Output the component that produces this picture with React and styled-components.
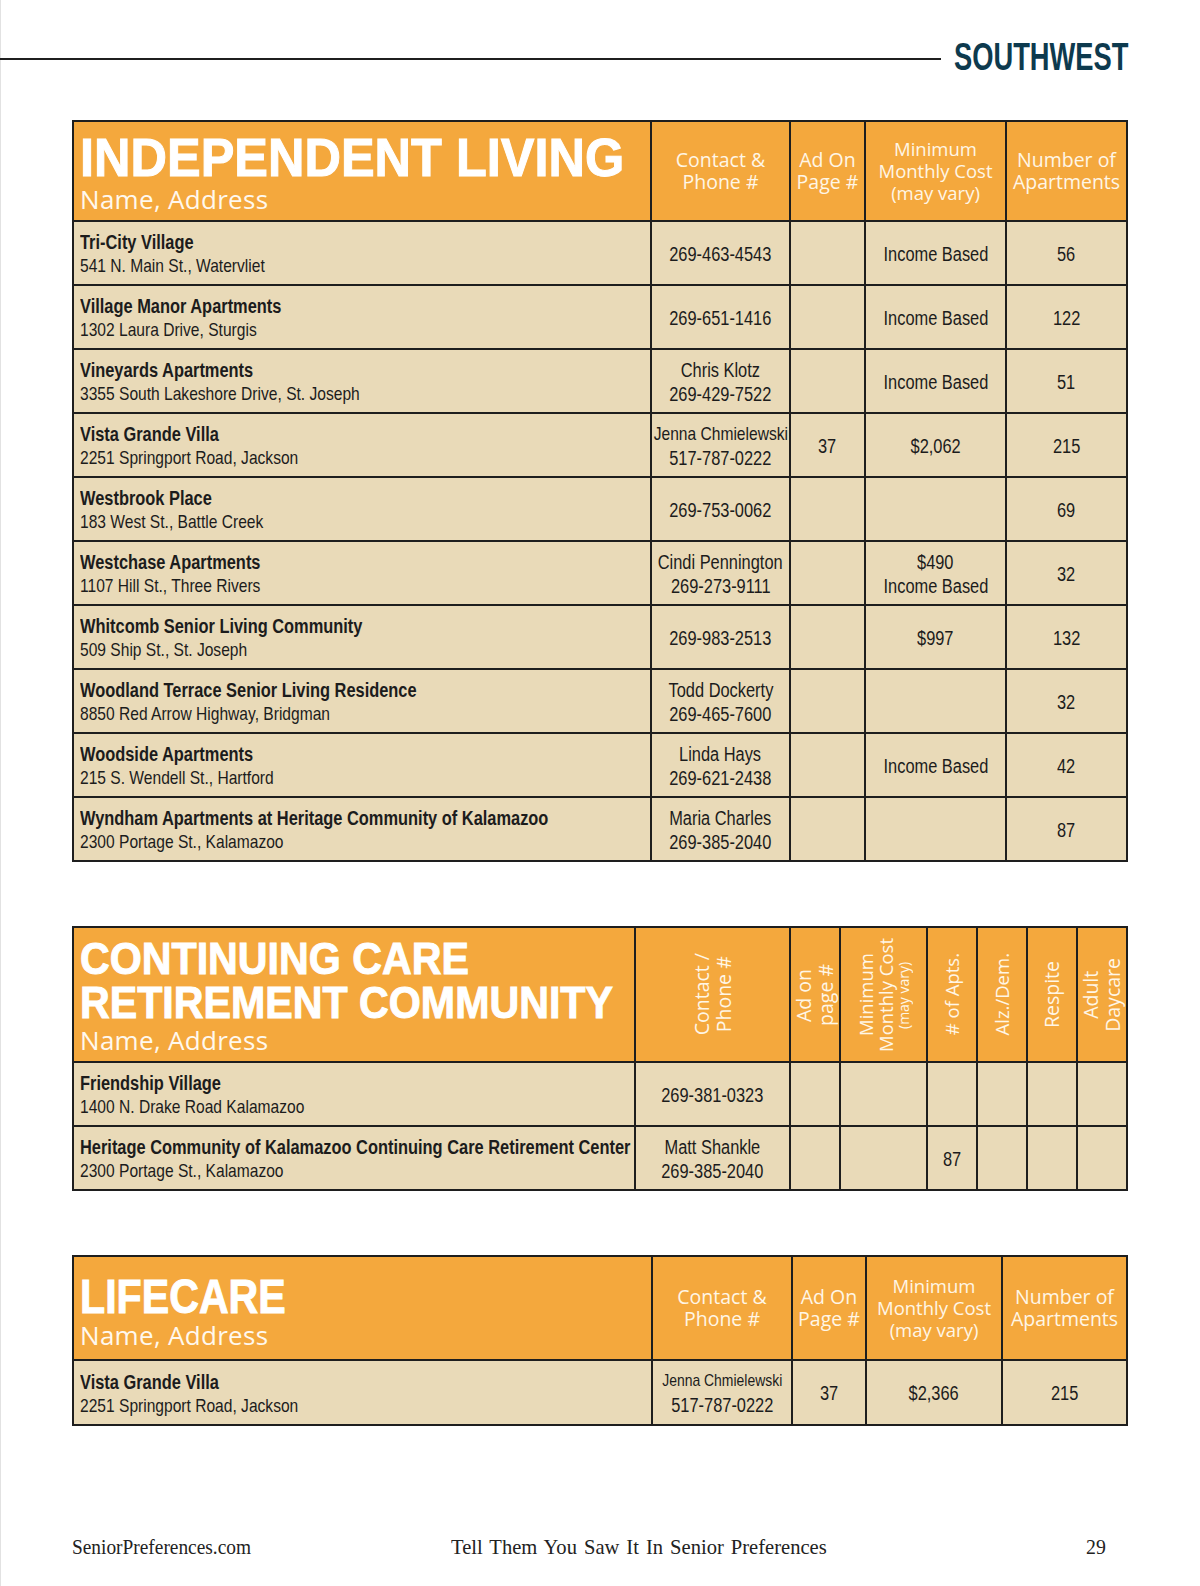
import styled, { createGlobalStyle } from "styled-components";

const GlobalStyle = createGlobalStyle`
  html, body {
    margin: 0;
    padding: 0;
    background: #ffffff;
  }
  body {
    font-family: "Liberation Sans", Arial, sans-serif;
    color: #1c1c1c;
  }
`;

const independent = [
    { name: "Tri-City Village", address: "541 N. Main St., Watervliet", contact: ["269-463-4543"], page: "", cost: ["Income Based"], units: "56" },
    { name: "Village Manor Apartments", address: "1302 Laura Drive, Sturgis", contact: ["269-651-1416"], page: "", cost: ["Income Based"], units: "122" },
    { name: "Vineyards Apartments", address: "3355 South Lakeshore Drive, St. Joseph", contact: ["Chris Klotz", "269-429-7522"], page: "", cost: ["Income Based"], units: "51" },
    { name: "Vista Grande Villa", address: "2251 Springport Road, Jackson", contact: ["Jenna Chmielewski", "517-787-0222"], fit: 19, page: "37", cost: ["$2,062"], units: "215" },
    { name: "Westbrook Place", address: "183 West St., Battle Creek", contact: ["269-753-0062"], page: "", cost: [], units: "69" },
    { name: "Westchase Apartments", address: "1107 Hill St., Three Rivers", contact: ["Cindi Pennington", "269-273-9111"], page: "", cost: ["$490", "Income Based"], units: "32" },
    { name: "Whitcomb Senior Living Community", address: "509 Ship St., St. Joseph", contact: ["269-983-2513"], page: "", cost: ["$997"], units: "132" },
    { name: "Woodland Terrace Senior Living Residence", address: "8850 Red Arrow Highway, Bridgman", contact: ["Todd Dockerty", "269-465-7600"], page: "", cost: [], units: "32" },
    { name: "Woodside Apartments", address: "215 S. Wendell St., Hartford", contact: ["Linda Hays", "269-621-2438"], page: "", cost: ["Income Based"], units: "42" },
    { name: "Wyndham Apartments at Heritage Community of Kalamazoo", address: "2300 Portage St., Kalamazoo", contact: ["Maria Charles", "269-385-2040"], page: "", cost: [], units: "87" },
];

const continuing = [
    { name: "Friendship Village", address: "1400 N. Drake Road Kalamazoo", contact: ["269-381-0323"], rest: ["", "", "", "", "", ""] },
    { name: "Heritage Community of Kalamazoo Continuing Care Retirement Center", address: "2300 Portage St., Kalamazoo", contact: ["Matt Shankle", "269-385-2040"], rest: ["", "", "87", "", "", ""] },
];

const lifecare = [
    { name: "Vista Grande Villa", address: "2251 Springport Road, Jackson", contact: ["Jenna Chmielewski", "517-787-0222"], fit: 17, page: "37", cost: ["$2,366"], units: "215" },
];

function Listing({ item }) {
    return (
        <NameCell>
            <Name>{item.name}</Name>
            <Address>{item.address}</Address>
        </NameCell>
    );
}

function Value({ lines, fit }) {
    return (
        <DataCell>
            {lines.filter(Boolean).map((line, i) => (
                <Line key={i} $size={fit && i === 0 ? fit : 20}>{line}</Line>
            ))}
        </DataCell>
    );
}

function Row({ item }) {
    return (
        <>
            <Listing item={item} />
            <Value lines={item.contact} fit={item.fit} />
            <Value lines={[item.page]} />
            <Value lines={item.cost} />
            <Value lines={[item.units]} />
        </>
    );
}

function CareRow({ item }) {
    return (
        <>
            <Listing item={item} />
            <Value lines={item.contact} />
            {item.rest.map((value, i) => <Value key={i} lines={[value]} />)}
        </>
    );
}

function StandardHead() {
    return (
        <>
            <HeadCell>Contact &amp;<br />Phone #</HeadCell>
            <HeadCell>Ad On<br />Page #</HeadCell>
            <HeadCell $size={18.5}>Minimum<br />Monthly Cost<br />(may vary)</HeadCell>
            <HeadCell>Number of<br />Apartments</HeadCell>
        </>
    );
}

export default function App() {
    return (
        <Page>
            <GlobalStyle />
            <TopBar>
                <Rule />
                <Region><span>SOUTHWEST</span></Region>
            </TopBar>

            <Content>
                <Sheet $cols="576px 137px 73px 139px 119px" $head={98} $row={62}>
                    <TitleCell $pad={8}>
                        <Title $size={54} $lh={54} $squeeze={0.935}>Independent Living</Title>
                        <Subtitle>Name, Address</Subtitle>
                    </TitleCell>
                    <StandardHead />
                    {independent.map((item) => <Row key={item.name} item={item} />)}
                </Sheet>

                <Sheet $cols="560px 153px 48px 85px 48px 48px 48px 48px" $head={133} $row={62}>
                    <TitleCell $pad={9}>
                        <Title $size={45} $lh={44} $squeeze={0.915}>Continuing Care<br />Retirement Community</Title>
                        <Subtitle>Name, Address</Subtitle>
                    </TitleCell>
                    <HeadCell><Vertical>Contact /<br />Phone #</Vertical></HeadCell>
                    <HeadCell><Vertical>Ad on<br />page #</Vertical></HeadCell>
                    <HeadCell $size={18.5}>
                        <Vertical $lh={20}>
                            <span>Minimum<br />Monthly Cost</span>
                            <Fine>(may vary)</Fine>
                        </Vertical>
                    </HeadCell>
                    <HeadCell $size={18.5}><Vertical># of Apts.</Vertical></HeadCell>
                    <HeadCell $size={18.5}><Vertical>Alz./Dem.</Vertical></HeadCell>
                    <HeadCell><Vertical>Respite</Vertical></HeadCell>
                    <HeadCell><Vertical>Adult<br />Daycare</Vertical></HeadCell>
                    {continuing.map((item) => <CareRow key={item.name} item={item} />)}
                </Sheet>

                <Sheet $cols="577px 138px 72px 134px 123px" $head={102} $row={63}>
                    <TitleCell $pad={15}>
                        <Title $size={49} $lh={48} $squeeze={0.84}>Lifecare</Title>
                        <Subtitle>Name, Address</Subtitle>
                    </TitleCell>
                    <StandardHead />
                    {lifecare.map((item) => <Row key={item.name} item={item} />)}
                </Sheet>
            </Content>

            <Footer>
                <FootText $squeeze={0.88}>SeniorPreferences.com</FootText>
                <FootText $squeeze={0.935} $words={2}>Tell Them You Saw It In Senior Preferences</FootText>
                <FootText $squeeze={0.9}>29</FootText>
            </Footer>
        </Page>
    );
}

const Page = styled.div`
    width: 1200px;
    min-height: 1586px;
    display: flex;
    flex-direction: column;
    box-shadow: inset 1px 0 0 #e2e2e2;
`;

const TopBar = styled.header`
    display: flex;
    align-items: center;
    gap: 13px;
    height: 40px;
    margin-top: 37px;
    padding-right: 72px;
`;

const Rule = styled.div`
    flex: 1;
    height: 2px;
    margin-top: 4px;
    background: #1f1f1f;
`;

const Region = styled.h2`
    width: 174px;
    margin: 0;
    font-weight: 700;
    font-size: 39px;
    line-height: 40px;
    color: #0d3a4e;
    white-space: nowrap;

    span {
        display: inline-block;
        transform: scaleX(0.7);
        transform-origin: left center;
    }
`;

const Content = styled.main`
    display: flex;
    flex-direction: column;
    gap: 64px;
    margin-top: 43px;
    padding: 0 72px;
`;

const Sheet = styled.section`
    display: grid;
    grid-template-columns: ${props => props.$cols};
    grid-template-rows: ${props => props.$head}px;
    grid-auto-rows: ${props => props.$row}px;
    gap: 2px;
    padding: 2px;
    background: #1e1e1e;
`;

const TitleCell = styled.div`
    padding: ${props => props.$pad}px 8px 0 6px;
    background: #f4a83d;
    color: #ffffff;
    overflow: hidden;
`;

const Title = styled.h1`
    margin: 0;
    font-weight: 700;
    font-size: ${props => props.$size}px;
    line-height: ${props => props.$lh}px;
    text-transform: uppercase;
    white-space: nowrap;
    -webkit-text-stroke: 1px #ffffff;
    transform: scaleX(${props => props.$squeeze});
    transform-origin: left top;
`;

const Subtitle = styled.div`
    font-family: "Open Sans", sans-serif;
    font-size: 26px;
    line-height: 30px;
    letter-spacing: 0.3px;
    color: #fff8ee;
`;

const HeadCell = styled.div`
    display: flex;
    align-items: center;
    justify-content: center;
    background: #f4a83d;
    text-align: center;
    font-family: "Open Sans", sans-serif;
    font-size: ${props => props.$size || 19.5}px;
    line-height: 22px;
    color: #fff6e6;
`;

const Vertical = styled.div`
    writing-mode: vertical-rl;
    transform: rotate(180deg);
    white-space: nowrap;
    text-align: center;
    line-height: ${props => props.$lh || 22}px;
`;

const Fine = styled.span`
    display: block;
    font-size: 14px;
    line-height: 15px;
`;

const NameCell = styled.div`
    display: flex;
    flex-direction: column;
    justify-content: center;
    align-items: flex-start;
    padding: 2px 6px 0;
    background: #e9dab8;
    line-height: 24px;
    white-space: nowrap;
`;

const Name = styled.div`
    font-weight: 700;
    font-size: 20px;
    transform: scaleX(0.82);
    transform-origin: left center;
`;

const Address = styled.div`
    font-size: 19px;
    transform: scaleX(0.82);
    transform-origin: left center;
`;

const DataCell = styled.div`
    display: flex;
    flex-direction: column;
    align-items: center;
    justify-content: center;
    padding-top: 1px;
    background: #e9dab8;
    line-height: 24px;
    white-space: nowrap;
`;

const Line = styled.div`
    font-size: ${props => props.$size}px;
    transform: scaleX(0.82);
    transform-origin: center;
`;

const Footer = styled.footer`
    display: grid;
    grid-template-columns: 379px 1fr auto;
    margin-top: 109px;
    padding: 0 92px 0 72px;
    font-family: "Liberation Serif", serif;
    font-size: 22px;
    line-height: 24px;
    color: #222222;
`;

const FootText = styled.span`
    justify-self: start;
    white-space: nowrap;
    word-spacing: ${props => props.$words || 0}px;
    transform: scaleX(${props => props.$squeeze});
    transform-origin: left center;
`;
